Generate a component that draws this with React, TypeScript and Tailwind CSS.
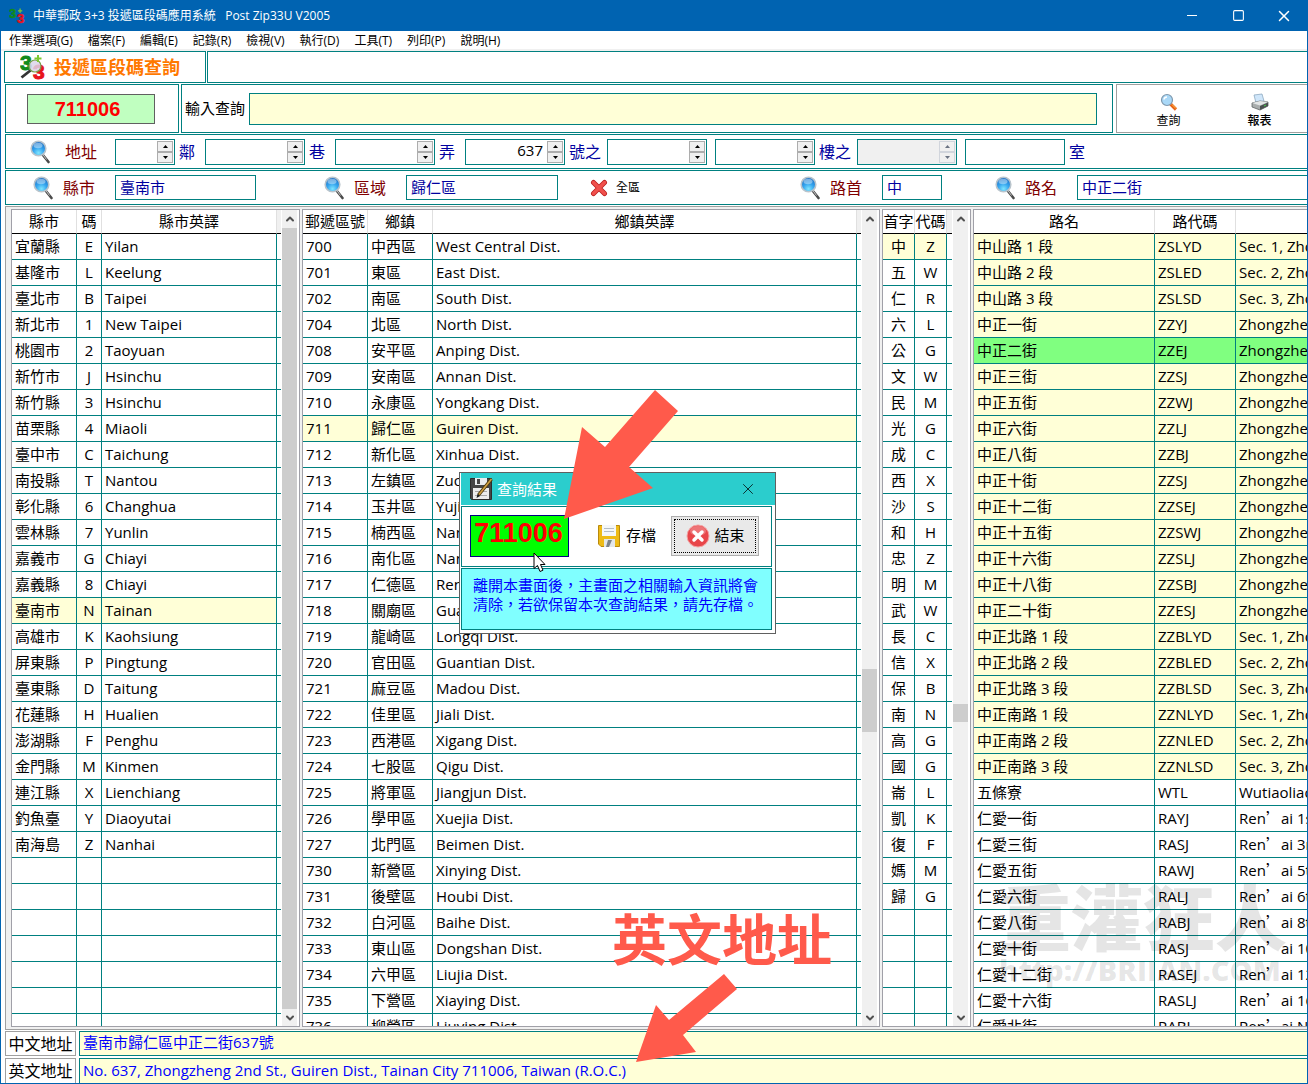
import React, { useId } from 'react';
import { ChevronDown, ChevronUp, Square, X } from 'lucide-react';

const MENU = ['作業選項(G)', '檔案(F)', '編輯(E)', '記錄(R)', '檢視(V)', '執行(D)', '工具(T)', '列印(P)', '說明(H)'];

const CITIES = [
  ['宜蘭縣', 'E', 'Yilan'],
  ['基隆市', 'L', 'Keelung'],
  ['臺北市', 'B', 'Taipei'],
  ['新北市', '1', 'New Taipei'],
  ['桃園市', '2', 'Taoyuan'],
  ['新竹市', 'J', 'Hsinchu'],
  ['新竹縣', '3', 'Hsinchu'],
  ['苗栗縣', '4', 'Miaoli'],
  ['臺中市', 'C', 'Taichung'],
  ['南投縣', 'T', 'Nantou'],
  ['彰化縣', '6', 'Changhua'],
  ['雲林縣', '7', 'Yunlin'],
  ['嘉義市', 'G', 'Chiayi'],
  ['嘉義縣', '8', 'Chiayi'],
  ['臺南市', 'N', 'Tainan'],
  ['高雄市', 'K', 'Kaohsiung'],
  ['屏東縣', 'P', 'Pingtung'],
  ['臺東縣', 'D', 'Taitung'],
  ['花蓮縣', 'H', 'Hualien'],
  ['澎湖縣', 'F', 'Penghu'],
  ['金門縣', 'M', 'Kinmen'],
  ['連江縣', 'X', 'Lienchiang'],
  ['釣魚臺', 'Y', 'Diaoyutai'],
  ['南海島', 'Z', 'Nanhai'],
];

const DISTRICTS = [
  ['700', '中西區', 'West Central Dist.'],
  ['701', '東區', 'East Dist.'],
  ['702', '南區', 'South Dist.'],
  ['704', '北區', 'North Dist.'],
  ['708', '安平區', 'Anping Dist.'],
  ['709', '安南區', 'Annan Dist.'],
  ['710', '永康區', 'Yongkang Dist.'],
  ['711', '歸仁區', 'Guiren Dist.'],
  ['712', '新化區', 'Xinhua Dist.'],
  ['713', '左鎮區', 'Zuozhen Dist.'],
  ['714', '玉井區', 'Yujing Dist.'],
  ['715', '楠西區', 'Nanxi Dist.'],
  ['716', '南化區', 'Nanhua Dist.'],
  ['717', '仁德區', 'Rende Dist.'],
  ['718', '關廟區', 'Guanmiao Dist.'],
  ['719', '龍崎區', 'Longqi Dist.'],
  ['720', '官田區', 'Guantian Dist.'],
  ['721', '麻豆區', 'Madou Dist.'],
  ['722', '佳里區', 'Jiali Dist.'],
  ['723', '西港區', 'Xigang Dist.'],
  ['724', '七股區', 'Qigu Dist.'],
  ['725', '將軍區', 'Jiangjun Dist.'],
  ['726', '學甲區', 'Xuejia Dist.'],
  ['727', '北門區', 'Beimen Dist.'],
  ['730', '新營區', 'Xinying Dist.'],
  ['731', '後壁區', 'Houbi Dist.'],
  ['732', '白河區', 'Baihe Dist.'],
  ['733', '東山區', 'Dongshan Dist.'],
  ['734', '六甲區', 'Liujia Dist.'],
  ['735', '下營區', 'Xiaying Dist.'],
  ['736', '柳營區', 'Liuying Dist.'],
];

const INITIALS = [
  ['中', 'Z'], ['五', 'W'], ['仁', 'R'], ['六', 'L'], ['公', 'G'], ['文', 'W'], ['民', 'M'],
  ['光', 'G'], ['成', 'C'], ['西', 'X'], ['沙', 'S'], ['和', 'H'], ['忠', 'Z'], ['明', 'M'],
  ['武', 'W'], ['長', 'C'], ['信', 'X'], ['保', 'B'], ['南', 'N'], ['高', 'G'], ['國', 'G'],
  ['崙', 'L'], ['凱', 'K'], ['復', 'F'], ['媽', 'M'], ['歸', 'G'],
];

const ROADS = [
  ['中山路 1 段', 'ZSLYD', 'Sec. 1, Zhongshan Rd.'],
  ['中山路 2 段', 'ZSLED', 'Sec. 2, Zhongshan Rd.'],
  ['中山路 3 段', 'ZSLSD', 'Sec. 3, Zhongshan Rd.'],
  ['中正一街', 'ZZYJ', 'Zhongzheng 1st St.'],
  ['中正二街', 'ZZEJ', 'Zhongzheng 2nd St.'],
  ['中正三街', 'ZZSJ', 'Zhongzheng 3rd St.'],
  ['中正五街', 'ZZWJ', 'Zhongzheng 5th St.'],
  ['中正六街', 'ZZLJ', 'Zhongzheng 6th St.'],
  ['中正八街', 'ZZBJ', 'Zhongzheng 8th St.'],
  ['中正十街', 'ZZSJ', 'Zhongzheng 10th St.'],
  ['中正十二街', 'ZZSEJ', 'Zhongzheng 12th St.'],
  ['中正十五街', 'ZZSWJ', 'Zhongzheng 15th St.'],
  ['中正十六街', 'ZZSLJ', 'Zhongzheng 16th St.'],
  ['中正十八街', 'ZZSBJ', 'Zhongzheng 18th St.'],
  ['中正二十街', 'ZZESJ', 'Zhongzheng 20th St.'],
  ['中正北路 1 段', 'ZZBLYD', 'Sec. 1, Zhongzheng N. Rd.'],
  ['中正北路 2 段', 'ZZBLED', 'Sec. 2, Zhongzheng N. Rd.'],
  ['中正北路 3 段', 'ZZBLSD', 'Sec. 3, Zhongzheng N. Rd.'],
  ['中正南路 1 段', 'ZZNLYD', 'Sec. 1, Zhongzheng S. Rd.'],
  ['中正南路 2 段', 'ZZNLED', 'Sec. 2, Zhongzheng S. Rd.'],
  ['中正南路 3 段', 'ZZNLSD', 'Sec. 3, Zhongzheng S. Rd.'],
  ['五條寮', 'WTL', 'Wutiaoliao'],
  ['仁愛一街', 'RAYJ', 'Ren’ai 1st St.'],
  ['仁愛三街', 'RASJ', 'Ren’ai 3rd St.'],
  ['仁愛五街', 'RAWJ', 'Ren’ai 5th St.'],
  ['仁愛六街', 'RALJ', 'Ren’ai 6th St.'],
  ['仁愛八街', 'RABJ', 'Ren’ai 8th St.'],
  ['仁愛十街', 'RASJ', 'Ren’ai 10th St.'],
  ['仁愛十二街', 'RASEJ', 'Ren’ai 12th St.'],
  ['仁愛十六街', 'RASLJ', 'Ren’ai 16th St.'],
  ['仁愛北街', 'RABJ', 'Ren’ai N. St.'],
];

const ROW_COUNT = 31;

const Magnifier: React.FC = () => {
  const id = useId();
  return (
    <svg width="20" height="24" viewBox="0 0 20 24" className="shrink-0">
      <defs>
        <radialGradient id={id} cx="0.5" cy="0.8" r="0.75">
          <stop offset="0" stopColor="#7fe6ff" />
          <stop offset="0.5" stopColor="#34a4ee" />
          <stop offset="1" stopColor="#1c6fc4" />
        </radialGradient>
      </defs>
      <path d="M12.5 14.5L18.500 22" stroke="#4a4a4a" strokeWidth="2.600" strokeLinecap="round" />
      <path d="M12.500 14L16.500 19.500" stroke="#c4c4c4" strokeWidth="1" />
      <circle cx="8.5" cy="8.5" r="7.3" fill={`url(#${id})`} stroke="#b9c4cc" strokeWidth="1.6" />
      <ellipse cx="8" cy="5.5" rx="4.5" ry="2.8" fill="#fff" opacity="0.4" />
    </svg>
  );
};

const Logo: React.FC<{ size: number; lens?: boolean }> = ({ size, lens }) => (
  <svg width={size} height={size} viewBox="0 0 26 26" className="shrink-0">
    <text x="0" y="16" fontSize="21" fontWeight="900" fontFamily="Liberation Sans, sans-serif" fill="#118a1c" stroke="#118a1c">3</text>
    <text x="13" y="25" fontSize="21" fontWeight="900" fontFamily="Liberation Sans, sans-serif" fill="#e8131c" stroke="#e8131c">3</text>
    {lens && (
      <>
        <path d="M11 16L1.500 23.500" stroke="#333" strokeWidth="2.800" />
        <circle cx="15" cy="12" r="6" fill="#dcd5ea" fillOpacity="0.850" stroke="#77a04a" strokeWidth="1.200" />
      </>
    )}
    <path d="M18 1v7M14.500 4.500h7" stroke="#7cc832" strokeWidth="2" />
  </svg>
);

const SaveAsIcon: React.FC = () => (
  <svg width="24" height="24" viewBox="0 0 24 24" className="shrink-0">
    <path d="M1.500 1.500h21v21h-20l-1-1z" fill="#454545" stroke="#2c2c2c" />
    <path d="M6 1h12v7H6z" fill="#e9ecee" />
    <rect x="8" y="2" width="3" height="5" fill="#454545" />
    <rect x="4" y="11" width="16" height="11" fill="#ececec" />
    <path d="M6 14.500h12M6 18.500h12" stroke="#a8a8a8" />
    <path d="M9.500 18L22.500 2" stroke="#4f3a0c" strokeWidth="3.400" />
    <path d="M10 17.500L22.500 2" stroke="#cfa043" strokeWidth="1.600" />
    <path d="M7.500 21l1-4 2.600 2z" fill="#1c1c1c" />
  </svg>
);

const SaveIcon: React.FC = () => (
  <svg width="24" height="24" viewBox="0 0 24 24" className="shrink-0">
    <path d="M1.500 1.500h21v21H4l-2.500-2.500z" fill="#eebb16" stroke="#b98a0c" />
    <rect x="5" y="1" width="14" height="11" fill="#f4f7f9" />
    <path d="M7 4.500h10M7 7.500h10" stroke="#b4bcc4" />
    <rect x="7" y="15" width="11" height="8" fill="#e3e6e8" />
    <path d="M9 23l2-7h4l-3 7z" fill="#7d8388" />
  </svg>
);

const Spinner: React.FC<{ label: string; width: string; value?: string; disabled?: boolean }> = ({
  label,
  width,
  value = '',
  disabled,
}) => {
  const tone = disabled ? 'border-gray-300 text-gray-500' : 'border-[#adadad] text-black';
  return (
    <div className={`flex h-[26px] shrink-0 border border-[#008080] p-px ${width} ${disabled ? 'bg-[#f0f0f0]' : 'bg-white'}`}>
      <input
        aria-label={label}
        defaultValue={value}
        disabled={disabled}
        className="min-w-0 flex-1 bg-transparent pr-1 pb-[2px] text-right text-[15px] outline-none"
      />
      <div className="flex w-4 flex-col">
        <button type="button" aria-label={`${label} +`} disabled={disabled} className={`flex flex-1 items-center justify-center border bg-[#f0f0f0] ${tone}`}>
          <svg width="5" height="3" viewBox="0 0 5 3"><path d="M0 3L2.500 0L5 3z" fill="currentColor" /></svg>
        </button>
        <button type="button" aria-label={`${label} -`} disabled={disabled} className={`flex flex-1 items-center justify-center border bg-[#f0f0f0] ${tone}`}>
          <svg width="5" height="3" viewBox="0 0 5 3"><path d="M0 0L2.500 3L5 0z" fill="currentColor" /></svg>
        </button>
      </div>
    </div>
  );
};

const Unit: React.FC<{ children: React.ReactNode; width: string }> = ({ children, width }) => (
  <span className={`shrink-0 pl-1 text-base text-[#0000a0] ${width}`}>{children}</span>
);

const SearchField: React.FC<{ label: string; value: string; offset: string; width: string }> = ({
  label,
  value,
  offset,
  width,
}) => {
  const id = useId();
  return (
    <div className={`flex items-center ${offset}`}>
      <Magnifier />
      <label htmlFor={id} className="mr-5 ml-2.5 shrink-0 text-base text-[#800000]">
        {label}
      </label>
      <input
        id={id}
        defaultValue={value}
        className={`h-[25px] min-w-0 border border-[#008080] px-1 pb-[2px] text-[15px] text-[#0000a0] outline-none ${width}`}
      />
    </div>
  );
};

const ScrollBar: React.FC<{ start: number; size: number }> = ({ start, size }) => (
  <div className="flex w-[18px] shrink-0 flex-col border-r-2 border-l border-white bg-[#f0f0f0]">
    <button type="button" aria-label="向上捲動" className="flex h-[18px] items-center justify-center text-[#505050]">
      <ChevronUp size={12} strokeWidth={4} />
    </button>
    <div className="flex min-h-0 flex-1 flex-col">
      <div style={{ height: `${start}%` }} />
      <div className="bg-[#cdcdcd]" style={{ height: `${size}%` }} />
    </div>
    <button type="button" aria-label="向下捲動" className="flex h-[17px] items-center justify-center text-[#505050]">
      <ChevronDown size={12} strokeWidth={4} />
    </button>
  </div>
);

interface Column {
  title: string;
  width?: string;
  center?: boolean;
}

interface GridProps {
  columns: Column[];
  rows: string[][];
  rowTone: (index: number) => string;
  frame: string;
  spacer?: string;
  scroll?: { start: number; size: number };
}

// the apostrophe in romanised names takes a full-width glyph
const cellText = (text: string) => {
  if (!text.includes('’')) return text;
  const [head, tail] = text.split('’');
  return (
    <>
      {head}
      <span lang="zh-TW" className="font-['Noto_Sans_CJK_TC',sans-serif]">’</span>
      {tail}
    </>
  );
};

const Grid: React.FC<GridProps> = ({ columns, rows, rowTone, frame, spacer, scroll }) => {
  const padded = [...rows, ...Array.from({ length: Math.max(0, ROW_COUNT - rows.length) }, () => [] as string[])];
  return (
    <div className={`flex min-h-0 overflow-hidden border border-[#a0a0a8] bg-white ${frame}`}>
      <div className="min-w-0 flex-1 overflow-hidden">
        <table className="w-full table-fixed border-separate border-spacing-0 text-[15px] leading-5 text-black">
          <colgroup>
            {columns.map((c, i) => (
              <col key={i} className={c.width} />
            ))}
            {spacer && <col className={spacer} />}
          </colgroup>
          <thead>
            <tr className="h-6">
              {columns.map((c, i) => (
                <th key={i} className="overflow-hidden border-r border-b border-r-[#e0e0e0] border-b-black px-0 pt-0 pb-[2px] font-normal whitespace-nowrap last:border-r-0">
                  {c.title}
                </th>
              ))}
              {spacer && <th aria-hidden="true" className="border-b border-black bg-[#f0f0f0] p-0" />}
            </tr>
          </thead>
          <tbody>
            {padded.map((row, r) => (
              <tr key={r} className="h-[26px]">
                {columns.map((c, i) => (
                  <td
                    key={i}
                    className={`overflow-hidden border-r border-b border-[#008080] pt-0 pb-[2px] whitespace-nowrap last:border-r-0 ${
                      c.center ? 'px-0 text-center' : 'px-[3px]'
                    } ${rowTone(r)}`}
                  >
                    {cellText(row[i] ?? '')}
                  </td>
                ))}
                {spacer && <td className="border-b border-[#008080] p-0" />}
              </tr>
            ))}
          </tbody>
        </table>
      </div>
      {scroll && <ScrollBar start={scroll.start} size={scroll.size} />}
    </div>
  );
};

const AddressLine: React.FC<{ label: string; value: string; last?: boolean }> = ({ label, value, last }) => {
  const id = useId();
  const edge = last ? 'border-b-0' : '';
  return (
    <div className="flex h-[25px] shrink-0 gap-[3px] pl-1">
      <label htmlFor={id} className={`flex w-[71px] items-center justify-center border border-[#a0a0a0] text-base leading-5 text-black ${edge}`}>
        {label}
      </label>
      <input
        id={id}
        defaultValue={value}
        className={`min-w-0 flex-1 border border-r-0 border-[#008080] bg-[#ffffd7] px-[3px] pb-[2px] text-[15px] text-[#0000ff] outline-none ${edge}`}
      />
    </div>
  );
};

const ResultDialog: React.FC = () => (
  <div role="dialog" aria-label="查詢結果" className="absolute top-[472px] left-[458px] w-[317px] border border-[#606060] bg-white pb-[3px] pl-px">
    <div className="flex h-8 items-center bg-[#2bcdcd] pl-2 text-[15px] text-white">
      <SaveAsIcon />
      <span className="ml-1 flex-1">查詢結果</span>
      <button type="button" aria-label="關閉" className="mr-[18px] text-black">
        <X size={18} strokeWidth={1} />
      </button>
    </div>
    <div className="mt-px mr-[3px] flex h-[61px] items-center border border-[#008080] pb-[2px] pl-2">
      <input
        aria-label="郵遞區號"
        defaultValue="711006"
        className="h-[42px] w-[99px] border border-[#000080] bg-[#00ff00] pr-[2px] pb-1 text-center font-['Liberation_Sans',sans-serif] text-[27px] font-bold text-[#ff0000] outline-none"
      />
      <button type="button" className="ml-7 flex items-center gap-[5px] text-[15px] text-black">
        <SaveIcon />
        存檔
      </button>
      <button type="button" className="ml-[15px] flex h-10 w-[88px] border border-[#adadad] bg-[#e9e9e9] p-[2px] text-[15px] text-black">
        <span className="flex h-full w-full items-center justify-center gap-[5px] border border-dotted border-black">
          <svg width="24" height="24" viewBox="0 0 24 24">
            <circle cx="12" cy="12" r="11" fill="#e8464a" stroke="#f3a5a5" />
            <ellipse cx="12" cy="7" rx="8" ry="5" fill="#fff" opacity="0.250" />
            <path d="M8 8l8 8M16 8l-8 8" stroke="#fff" strokeWidth="3.500" strokeLinecap="round" />
          </svg>
          結束
        </span>
      </button>
    </div>
    <p className="mt-px mr-[3px] h-[62px] border border-[#008080] bg-[#80ffff] pt-[7px] pl-[11px] text-[15px] leading-[19px] whitespace-nowrap text-[#0000ff]">
      離開本畫面後，主畫面之相關輸入資訊將會
      <br />
      清除，若欲保留本次查詢結果，請先存檔。
    </p>
  </div>
);

const App: React.FC = () => {
  return (
    <div
      lang="zh-TW"
      className="relative flex h-screen flex-col overflow-hidden border-x border-b border-[#0063b1] bg-white font-['Open_Sans','Noto_Sans_CJK_TC',sans-serif]"
    >
      <header className="flex h-[31px] shrink-0 items-center bg-[#0063b1] pl-2 text-xs text-white">
        <Logo size={16} />
        <h1 className="ml-2 flex-1 whitespace-pre">中華郵政 3+3 投遞區段碼應用系統   Post Zip33U V2005</h1>
        <button type="button" aria-label="最小化" className="flex h-full w-[46px] items-center justify-center">
          <span className="h-px w-2.5 bg-white" />
        </button>
        <button type="button" aria-label="最大化" className="flex h-full w-[46px] items-center justify-center">
          <Square size={13} strokeWidth={2} />
        </button>
        <button type="button" aria-label="關閉" className="flex h-full w-[46px] items-center justify-center">
          <X size={18} strokeWidth={2} />
        </button>
      </header>

      <nav className="flex h-5 shrink-0 items-center gap-[15px] border-b-2 border-[#f0f0f0] pl-2 text-xs text-black">
        {MENU.map((item) => (
          <button key={item} type="button" className="pt-px">
            {item}
          </button>
        ))}
      </nav>

      <div className="flex h-8 shrink-0 gap-px pl-[3px]">
        <div className="flex w-[202px] items-center border border-[#008080] pl-[15px]">
          <Logo size={26} lens />
          <h2 className="ml-2 text-lg font-bold text-[#ff7800]">投遞區段碼查詢</h2>
        </div>
        <div className="flex-1 border border-r-0 border-[#008080]" />
      </div>

      <div className="mt-px flex h-[49px] shrink-0 pl-1">
        <div className="flex w-[174px] items-center border border-[#008080] pl-[21px]">
          <output className="w-32 border border-[#606060] bg-[#c0ffc0] pr-[7px] text-center font-['Liberation_Sans',sans-serif] text-xl leading-7 font-bold text-[#ff0000]">
            711006
          </output>
        </div>
        <div className="ml-[2px] flex flex-1 items-center border border-[#008080] pr-[15px] pl-[3px]">
          <label htmlFor="query" className="mr-1 text-[15px] text-black">
            輸入查詢
          </label>
          <input id="query" className="h-8 min-w-0 flex-1 border border-[#008080] bg-[#ffffd7] px-1 outline-none" />
        </div>
        <div className="ml-[3px] flex w-[191px] border border-r-0 border-[#a0a0a0] pl-[6px] text-xs text-black">
          <button type="button" className="flex w-[91px] flex-col items-center justify-center gap-[2px] pt-1">
            <svg width="18" height="18" viewBox="0 0 18 18">
              <path d="M10.500 11L16 16.500" stroke="#e8641a" strokeWidth="3.200" />
              <path d="M12 11.500L16 15.500" stroke="#ffc24a" strokeWidth="1" />
              <circle cx="7" cy="7" r="5.500" fill="#a9d8f7" stroke="#7f98ad" strokeWidth="1.200" />
              <path d="M4 6.500a3 3 0 0 1 3-2.500" stroke="#fff" strokeWidth="1.500" fill="none" />
            </svg>
            查詢
          </button>
          <button type="button" className="flex w-[91px] flex-col items-center justify-center gap-[2px] pt-1 font-medium">
            <svg width="18" height="18" viewBox="0 0 18 18">
              <path d="M3 2l8-1 2 7-8 2z" fill="#cfe6fa" stroke="#8ea9c0" strokeWidth="0.800" />
              <path d="M1 10l8-2 8 1v4l-8 4-8-3z" fill="#a9adad" stroke="#606464" strokeWidth="0.800" />
              <path d="M1 10l8-2 8 1-8 3.500z" fill="#e3e6e6" />
              <path d="M9 13l8-3.500v3.500l-8 4z" fill="#4b4f4f" />
              <path d="M13 13l2-1" stroke="#48c04c" strokeWidth="1.200" />
            </svg>
            報表
          </button>
        </div>
      </div>

      <div className="mt-px flex h-[35px] shrink-0 pl-1">
        <div className="flex min-w-0 flex-1 items-center overflow-hidden border border-r-0 border-[#008080] pl-6">
          <Magnifier />
          <span className="w-[65px] shrink-0 pl-[15px] text-base text-[#800000]">地址</span>
          <Spinner label="鄰" width="w-[60px]" />
          <Unit width="w-[30px]">鄰</Unit>
          <Spinner label="巷" width="w-[100px]" />
          <Unit width="w-[30px]">巷</Unit>
          <Spinner label="弄" width="w-[100px]" />
          <Unit width="w-[30px]">弄</Unit>
          <Spinner label="號" value="637" width="w-[100px]" />
          <Unit width="w-[42px]">號之</Unit>
          <Spinner label="號之" width="w-[100px]" />
          <div className="w-2 shrink-0" />
          <Spinner label="樓" width="w-[100px]" />
          <Unit width="w-[42px]">樓之</Unit>
          <Spinner label="樓之" width="w-[100px]" disabled />
          <input aria-label="室" className="ml-2 h-[26px] w-[100px] shrink-0 border border-[#008080] px-1 text-[15px] outline-none" />
          <Unit width="w-[30px]">室</Unit>
        </div>
      </div>

      <div className="mt-px flex h-[35px] shrink-0 pl-1">
        <div className="flex min-w-0 flex-1 items-center overflow-hidden border border-r-0 border-[#008080] pl-[27px]">
          <SearchField label="縣市" value="臺南市" offset="shrink-0" width="w-[141px]" />
          <SearchField label="區域" value="歸仁區" offset="ml-[68px] shrink-0" width="w-[152px]" />
          <button type="button" className="mr-40 ml-8 flex shrink-0 items-center gap-2 text-xs text-black">
            <svg width="18" height="18" viewBox="0 0 18 18">
              <path d="M3.500 3.500l11 11M14.500 3.500l-11 11" stroke="#b81d1d" strokeWidth="5" strokeLinecap="round" />
              <path d="M3.500 3.500l11 11M14.500 3.500l-11 11" stroke="#f0504c" strokeWidth="3.500" strokeLinecap="round" />
            </svg>
            全區
          </button>
          <SearchField label="路首" value="中" offset="shrink-0" width="w-[60px]" />
          <SearchField label="路名" value="中正二街" offset="ml-[53px] min-w-0 flex-1" width="flex-1 border-r-0" />
        </div>
      </div>

      <main className="mt-px ml-1 flex min-h-0 flex-1 gap-[2px] border border-r-0 border-[#a0a0a0] bg-[#f0f0f0] py-[2px] pl-[5px]">
        <Grid
          frame="w-[289px] shrink-0"
          columns={[
            { title: '縣市', width: 'w-[65px]' },
            { title: '碼', width: 'w-[25px]', center: true },
            { title: '縣市英譯' },
          ]}
          rows={CITIES}
          rowTone={(r) => (r === 14 ? 'bg-[#ffffd7]' : '')}
          spacer="w-1"
          scroll={{ start: 0, size: 100 }}
        />
        <Grid
          frame="w-[578px] shrink-0"
          columns={[
            { title: '郵遞區號', width: 'w-[65px]' },
            { title: '鄉鎮', width: 'w-[65px]' },
            { title: '鄉鎮英譯' },
          ]}
          rows={DISTRICTS}
          rowTone={(r) => (r === 7 ? 'bg-[#ffffd7]' : '')}
          spacer="w-1"
          scroll={{ start: 56.5, size: 8 }}
        />
        <Grid
          frame="w-[89px] shrink-0"
          columns={[
            { title: '首字', width: 'w-8', center: true },
            { title: '代碼', width: 'w-8', center: true },
          ]}
          rows={INITIALS}
          rowTone={(r) => (r === 0 ? 'bg-[#ffffd7]' : '')}
          spacer="w-[5px]"
          scroll={{ start: 61, size: 2.2 }}
        />
        <Grid
          frame="min-w-0 flex-1 border-r-0"
          columns={[
            { title: '路名', width: 'w-[181px]' },
            { title: '路代碼', width: 'w-[81px]' },
            { title: '' },
          ]}
          rows={ROADS}
          rowTone={(r) => (r === 4 ? 'bg-[#80ff80]' : r < 21 ? 'bg-[#ffffd7]' : '')}
        />
      </main>

      <footer className="flex shrink-0 flex-col gap-[2px] pt-px">
        <AddressLine label="中文地址" value="臺南市歸仁區中正二街637號" />
        <AddressLine
          label="英文地址"
          value="No. 637, Zhongzheng 2nd St., Guiren Dist., Tainan City 711006, Taiwan (R.O.C.)"
          last
        />
      </footer>

      <ResultDialog />

      <svg width="116" height="132" viewBox="563 389 116 132" className="pointer-events-none absolute top-[389px] left-[562px]">
        <polygon points="655,390 678,411 629,467 653,488 564,519 582,427 605,447" fill="#ff5a4b" />
      </svg>
      <svg width="14" height="21" viewBox="0 0 14 21" className="pointer-events-none absolute top-[552px] left-[532px]">
        <path d="M1 1v15.500l3.500-3 2.500 6 3-1.300-2.500-5.700H12z" fill="#fff" stroke="#000" />
      </svg>

      <div className="pointer-events-none absolute top-[909px] left-[611px] text-[55px] leading-[60px] font-bold text-[#ff5a4b]">英文地址</div>
      <svg width="104" height="90" viewBox="635 973 104 90" className="pointer-events-none absolute top-[973px] left-[634px]">
        <polygon points="724,974 737,989 683,1035 696,1052 636,1062 656,1005 669,1020" fill="#ff5a4b" />
      </svg>

      <div className="pointer-events-none absolute top-[880px] left-[998px] whitespace-nowrap text-black/10">
        <div className="text-[72px] leading-[74px] font-black">重灌狂人</div>
        <div className="text-[29px] leading-8 font-extrabold">http://BRIIAN.COM</div>
      </div>
    </div>
  );
};

export default App;
